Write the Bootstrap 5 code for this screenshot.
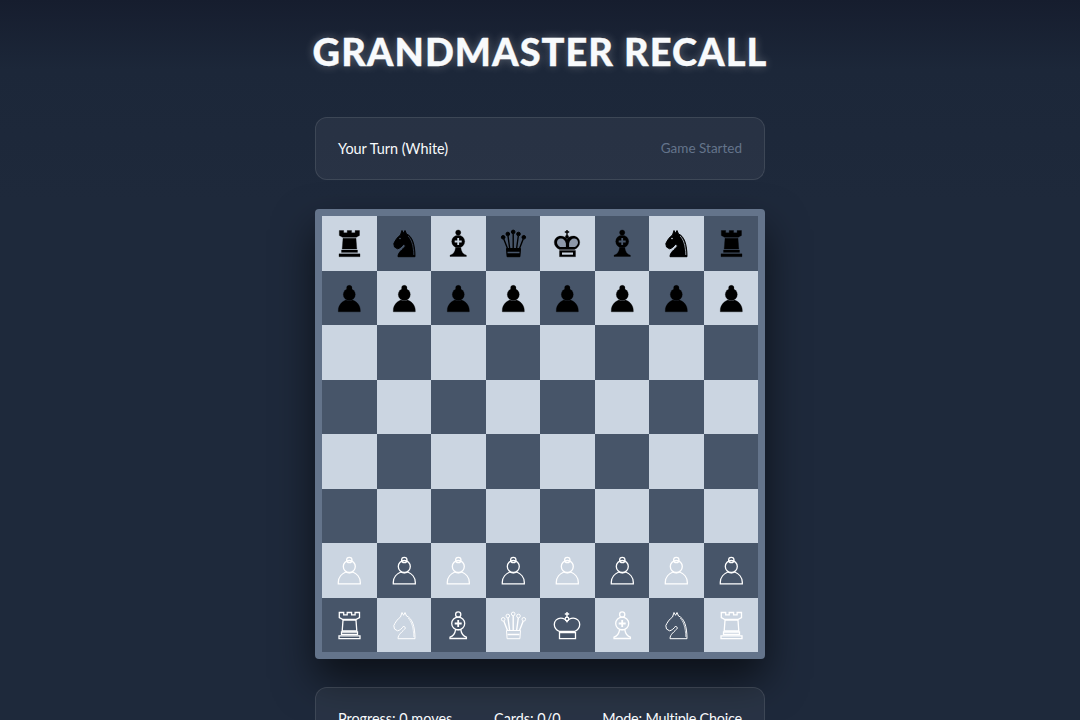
<!DOCTYPE html>
<html lang="en">
<head>
  <meta charset="UTF-8">
  <meta name="viewport" content="width=device-width, initial-scale=1">
  <title>Grandmaster Recall</title>
  <link href="https://cdn.jsdelivr.net/npm/bootstrap@5.3.2/dist/css/bootstrap.min.css" rel="stylesheet">
  <script src="https://cdn.jsdelivr.net/npm/bootstrap@5.3.2/dist/js/bootstrap.bundle.min.js"></script>
  <style>
    body {
      min-height: 100vh;
      background: linear-gradient(180deg, #161d2e 0, #1c2739 70px, #1e293b 200px);
      color: #f8fafc;
      font-family: "Lato", "Liberation Sans", sans-serif;
    }
    .game-wrap { width: 450px; }
    .game-title {
      margin: 29px -10px 44px;
      font-family: "Lato", sans-serif;
      font-size: 38px;
      font-weight: 900;
      line-height: 44px;
      letter-spacing: 1px;
      white-space: nowrap;
      color: #f8fafc;
      -webkit-text-stroke: .3px #f8fafc;
      text-shadow: 0 0 10px rgba(255, 255, 255, .3);
    }
    .info-panel {
      height: 63px;
      padding: 0 22px;
      background: rgba(255, 255, 255, .05);
      border: 1px solid rgba(255, 255, 255, .1);
      border-radius: 12px;
      font-size: 14.4px;
    }
    .status-text { color: #64748b; font-size: 13.5px; }
    .mode-text { letter-spacing: -.2px; }
    .chess-board {
      display: grid;
      grid-template-columns: repeat(8, 1fr);
      grid-template-rows: repeat(8, 1fr);
      width: 450px;
      height: 450px;
      margin: 29px 0 28px;
      padding: 7px;
      background: #64748b;
      border-radius: 4px;
      box-shadow: 0 20px 40px rgba(0, 0, 0, .6);
    }
    .cell-light { background: #cbd5e1; --detail: #cbd5e1; --hole: #cbd5e1; --lobe: #8d98a9; }
    .cell-dark { background: #475569; --detail: #475569; --hole: #475569; --lobe: #3a4657; }
    .chess-piece { width: 54px; height: 54px; flex: none; }
    .piece-black { fill: #000; stroke: #000; stroke-width: .3; }
    .piece-white { fill: none; stroke: #fff; stroke-width: 1.3; --detail: #fff; --hole: none; --lobe: none; }
    .piece-thin { stroke-width: 1; }
    .piece-line { fill: none; stroke: var(--detail); stroke-width: 1.5; }
    .piece-hole { fill: var(--hole); stroke: none; }
    .piece-lobe { fill: var(--lobe); stroke: none; }
    .line-thin { stroke-width: .7; }
    .line-cross { stroke-width: 1.8; }
    .stalk { stroke-width: 1.4; }
  </style>
</head>
<body>
  <svg width="0" height="0" class="position-absolute">
    <symbol id="rook" viewBox="0 0 54 54">
      <path d="M17.300 14.500h4.400v2.300h3.500v-2.300h4.400v2.300h3.500v-2.300h4.400v5l-3.200 1.800H20.500l-3.200-1.800z"/>
      <path d="M21 22.200h13l.8 10.800H20.200z"/>
      <path d="M19.500 34h16v2.400h-16z"/>
      <path d="M17 37.800h21v2.900H17z"/>
    </symbol>
    <symbol id="knight" viewBox="0 0 54 54">
      <path d="M25 14.500l1.600 2.800 1.400-2.800 1.500 3.500C35 20 38 28 38 40.700H21c0-4.700 4.500-6.700 7.500-10.700l-1.800-2c-1.700 2.500-4 4.500-6.200 4.800l-3-1.800-.7-3.300c1.200-3 3.700-6.700 6.700-8.700z"/>
      <path class="piece-line line-thin" d="M31 20c3.500 3 5.600 10 5.800 19"/>
      <circle class="piece-hole" cx="23" cy="22.500" r=".8"/>
    </symbol>
    <symbol id="bishop" viewBox="0 0 54 54">
      <circle cx="27.200" cy="16.500" r="2.600"/>
      <ellipse cx="27.200" cy="25.500" rx="6.500" ry="6.300"/>
      <path d="M19 40.500v-1.300c3.500-1 5-3.500 5.600-7.500h5.200c.6 4 2.100 6.500 5.600 7.500v1.300z"/>
      <path class="piece-line line-cross" d="M27.200 22v7M23.700 25.500h7"/>
    </symbol>
    <symbol id="queen" viewBox="0 0 54 54">
      <circle cx="17.200" cy="21.300" r="1.800"/>
      <circle cx="21.800" cy="18" r="1.800"/>
      <circle cx="27.200" cy="15.900" r="1.800"/>
      <circle cx="32.500" cy="18" r="1.800"/>
      <circle cx="37.800" cy="21.300" r="1.800"/>
      <path class="stalk" d="M17.800 23l3.700 9.500M22 20l1.700 12.500M27.200 18v14.500M32.300 20l-1.700 12.500M37.200 23l-3.700 9.500"/>
      <path d="M20.500 32.500h14l-.6 8.200H21.100z"/>
      <path class="piece-line" d="M21.500 36.500h12"/>
    </symbol>
    <symbol id="king" viewBox="0 0 54 54">
      <path class="stalk" d="M27 14v6M24.800 16h4.400"/>
      <circle cx="27" cy="21" r="1.800"/>
      <path d="M19.500 33.500c-3.200-1.500-5.200-4-5.200-7 0-3.800 3-6.400 6.500-6.400 2.900 0 5 1.400 6.200 3.500 1.200-2.100 3.300-3.500 6.200-3.500 3.500 0 6.500 2.600 6.500 6.400 0 3-2 5.500-5.200 7z"/>
      <path d="M19.500 34.500h16v6.200h-16z"/>
      <path class="piece-lobe" d="M20.200 31c-2-1-3.200-2.600-3.200-4.500 0-2.300 1.800-3.900 3.900-3.900 2.500 0 4.600 2 5 5v3.400zM34.800 31c2-1 3.200-2.600 3.200-4.500 0-2.300-1.800-3.900-3.900-3.900-2.500 0-4.600 2-5 5v3.400z"/>
      <path class="piece-hole" d="M22 36.500h11v2.200H22z"/>
    </symbol>
    <symbol id="pawn" viewBox="0 0 54 54">
      <circle cx="27.300" cy="17" r="2.700"/>
      <circle cx="27.300" cy="23.500" r="6"/>
      <path d="M16.300 40.800v-1.500c0-5 3.700-8.800 7.500-10.300 2 .9 5 .9 7 0 3.800 1.500 7.500 5.300 7.500 10.300v1.500z"/>
    </symbol>
  </svg>

  <div class="game-wrap mx-auto">
    <h1 class="game-title text-center">GRANDMASTER RECALL</h1>

    <div class="info-panel d-flex justify-content-between align-items-center">
      <span>Your Turn (White)</span>
      <span class="status-text">Game Started</span>
    </div>

    <div class="chess-board" id="board"></div>

    <div class="info-panel d-flex justify-content-between align-items-center">
      <span>Progress: 0 moves</span>
      <span>Cards: 0/0</span>
      <span class="mode-text">Mode: Multiple Choice</span>
    </div>
  </div>

  <script>
    // Start position, top row first. Capitals are white.
    const names = { r: "rook", n: "knight", b: "bishop", q: "queen", k: "king", p: "pawn" };
    const rows = ["rnbqkbnr", "pppppppp", "        ", "        ", "        ", "        ", "PPPPPPPP", "RNBQKBNR"];
    const board = document.getElementById("board");
    rows.forEach((row, r) => {
      [...row].forEach((piece, c) => {
        let cell = document.createElement("div");
        cell.className = "d-flex align-items-center justify-content-center " +
          ((r + c) % 2 === 0 ? "cell-light" : "cell-dark");
        if (piece.trim()) {
          let name = names[piece.toLowerCase()];
          let colour = r < 2 ? "piece-black" : "piece-white";
          let thin = (name === "knight" || name === "queen") ? " piece-thin" : "";
          cell.innerHTML = `<svg class="chess-piece ${colour}${thin}" viewBox="0 0 54 54" role="img" aria-label="${name}"><use href="#${name}"></use></svg>`;
        }
        board.appendChild(cell);
      });
    });
  </script>
</body>
</html>
